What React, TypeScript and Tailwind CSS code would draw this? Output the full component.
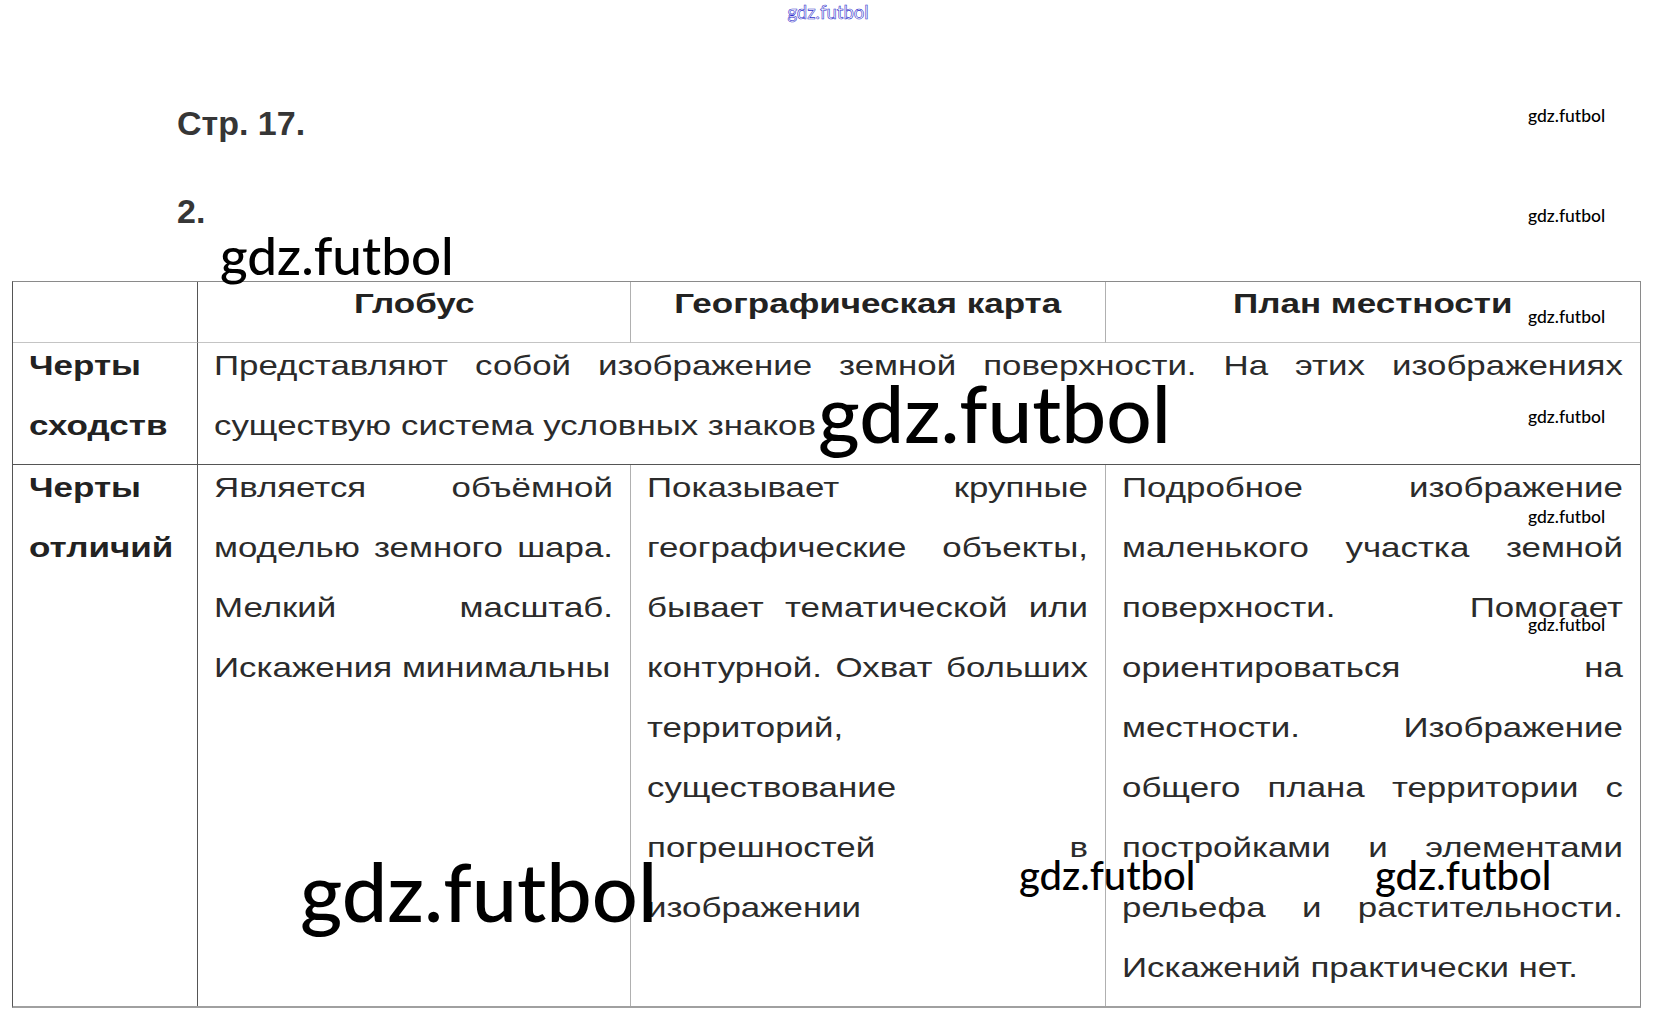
const Line = ({ text, justify }: { text: string; justify?: boolean }) =>
  justify ? (
    <div className="flex justify-between">
      {text.split(' ').map((w, i) => (
        <span key={i}>{w}</span>
      ))}
    </div>
  ) : (
    <div className="whitespace-nowrap">{text}</div>
  );

// every line but the last is justified, as in the scan
const Cell = ({ lines, className = '' }: { lines: string[]; className?: string }) => (
  <div className={`pl-4 pr-[17px] ${className}`}>
    <div className="-mt-[7px] w-[calc(100%/1.245)] origin-left scale-x-[1.245] text-[28px] leading-[60px]">
      {lines.map((l, i) => (
        <Line key={i} text={l} justify={i < lines.length - 1} />
      ))}
    </div>
  </div>
);

const Label = ({ lines, className = '' }: { lines: string[]; className?: string }) => (
  <div className={`pl-4 ${className}`}>
    <div className="-mt-[7px] w-[calc(100%/1.25)] origin-left scale-x-[1.25] text-[28px] font-bold leading-[60px] text-[#222]">
      {lines.map((l) => (
        <div key={l}>{l}</div>
      ))}
    </div>
  </div>
);

const Head = ({ title, className = '' }: { title: string; className?: string }) => (
  <div className={`text-center text-[28px] font-bold leading-[44px] text-[#222] ${className}`}>
    <span className="inline-block scale-x-[1.25]">{title}</span>
  </div>
);

const Mark = ({ className }: { className: string }) => (
  <div className={`absolute whitespace-nowrap font-['Lato',sans-serif] font-medium leading-none text-black ${className}`}>gdz.futbol</div>
);

export default function App() {
  return (
    <div className="relative h-[1025px] w-[1656px] overflow-hidden bg-white font-['Liberation_Sans',Arial,sans-serif] text-[#2b2b2b]">
      <div className="pl-[177px] pt-[103px] text-[34px] font-bold leading-[40px] text-[#363636]">
        <p>Стр. 17.</p>
        <p className="mt-[48px]">2.</p>
      </div>

      <div className="ml-[12px] mt-[50px] grid w-[1629px] grid-cols-[185px_433px_475px_534px] grid-rows-[61px_122px_541px] border border-t-[#8a8a8a] border-l-[#555] border-r-[#8a8a8a] border-b-2 border-b-[#a0a0a0]">
        <div className="border-r border-b border-r-[#555] border-b-[#c4c4c4]" />
        <Head title="Глобус" className="border-r border-b border-r-[#b0b0b0] border-b-[#c4c4c4]" />
        <Head title="Географическая карта" className="border-r border-b border-r-[#b0b0b0] border-b-[#c4c4c4]" />
        <Head title="План местности" className="border-b border-b-[#c4c4c4]" />

        <Label lines={['Черты', 'сходств']} className="border-r border-b border-[#555]" />
        <Cell
          className="col-span-3 border-b border-[#555]"
          lines={['Представляют собой изображение земной поверхности. На этих изображениях', 'существую система условных знаков']}
        />

        <Label lines={['Черты', 'отличий']} className="border-r border-[#555]" />
        <Cell
          className="border-r border-[#b0b0b0]"
          lines={['Является объёмной', 'моделью земного шара.', 'Мелкий масштаб.', 'Искажения минимальны']}
        />
        <div className="border-r border-[#b0b0b0] pl-4 pr-[17px]">
          <div className="-mt-[7px] w-[calc(100%/1.245)] origin-left scale-x-[1.245] text-[28px] leading-[60px]">
            <Line justify text="Показывает крупные" />
            <Line justify text="географические объекты," />
            <Line justify text="бывает тематической или" />
            <Line justify text="контурной. Охват больших" />
            <Line text="территорий," />
            <Line text="существование" />
            <Line justify text="погрешностей в" />
            <Line text="изображении" />
          </div>
        </div>
        <Cell
          lines={[
            'Подробное изображение',
            'маленького участка земной',
            'поверхности. Помогает',
            'ориентироваться на',
            'местности. Изображение',
            'общего плана территории с',
            'постройками и элементами',
            'рельефа и растительности.',
            'Искажений практически нет.',
          ]}
        />
      </div>

      {/* watermarks over the page */}
      <div className="absolute left-0 right-0 top-[3px] text-center font-['Lato',sans-serif] text-[18.5px] leading-none text-white [-webkit-text-stroke:0.6px_#3030cc]">
        gdz.futbol
      </div>
      <Mark className="left-[220px] top-[228px] text-[53px]" />
      <Mark className="left-[818px] top-[372px] text-[80px]" />
      <Mark className="left-[300px] top-[850px] text-[81px]" />
      <Mark className="left-[1019px] top-[855px] text-[40px]" />
      <Mark className="left-[1375px] top-[855px] text-[40px]" />
      <Mark className="left-[1528px] top-[107px] text-[17.5px]" />
      <Mark className="left-[1528px] top-[207px] text-[17.5px]" />
      <Mark className="left-[1528px] top-[308px] text-[17.5px]" />
      <Mark className="left-[1528px] top-[408px] text-[17.5px]" />
      <Mark className="left-[1528px] top-[508px] text-[17.5px]" />
      <Mark className="left-[1528px] top-[616px] text-[17.5px]" />
    </div>
  );
}
